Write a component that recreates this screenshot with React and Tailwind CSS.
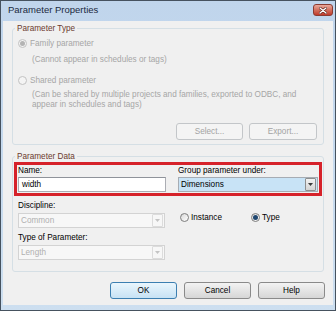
import React from 'react';

const Radio = ({ checked, disabled }) => (
  <span
    className={`w-[9px] h-[9px] rounded-full border shrink-0 flex items-center justify-center ${
      disabled ? 'border-[#c2c2c2] bg-[#f4f4f4]' : 'border-[#7d7d7d] bg-gradient-to-br from-[#d8d8d8] to-[#ffffff]'
    }`}
  >
    {checked && (
      <span className={`w-[5px] h-[5px] rounded-full ${disabled ? 'bg-[#b4b4b4]' : 'bg-[#1f466f]'}`} />
    )}
  </span>
);

const Arrow = ({ disabled }) => (
  <span
    className={`w-[11px] h-[13px] shrink-0 flex items-center justify-center border rounded-[1px] ${
      disabled ? 'border-[#dcdcdc] bg-[#f7f7f7]' : 'border-[#8e8f8f] bg-gradient-to-b from-[#f2f2f2] to-[#d4d4d4]'
    }`}
  >
    <svg width="5" height="3" viewBox="0 0 5 3">
      <path d="M0 0h5L2.5 3z" fill={disabled ? '#c4c4c4' : '#3a3a3a'} />
    </svg>
  </span>
);

const Btn = ({ children, disabled, primary, w }) => (
  <div
    className={`${w} h-[17px] rounded-[3px] border flex items-center justify-center ${
      disabled
        ? 'border-[#c3c6c9] bg-[#f4f4f4] text-[#a3a3a3]'
        : primary
        ? 'border-[#3c7fb1] bg-gradient-to-b from-[#eaf6fd] to-[#c7e2f4] text-black'
        : 'border-[#8a8a8a] bg-gradient-to-b from-[#f3f3f3] to-[#d6d6d6] text-black'
    }`}
  >
    {children}
  </div>
);

// group box with caption sitting on its top border
const Group = ({ title, className, children }) => (
  <div className={`border border-[#d5dfe5] rounded-[3px] ${className}`}>
    <div className="-mt-[6px] ml-[2px] px-[2px] w-fit bg-[#f0f0f0] text-[#6b3b2f]">{title}</div>
    {children}
  </div>
);

export default function App() {
  return (
    <div className="w-[336px] h-[311px] border border-[#46525f] bg-gradient-to-b from-[#c0d5ec] to-[#cddff0] flex flex-col px-[2px] pb-[5px] font-['Liberation_Sans',Arial,sans-serif] text-[8.2px] leading-[11px] text-black overflow-hidden">
      {/* title bar */}
      <div className="h-[20px] shrink-0 flex items-start justify-between pl-[5px] pt-[3px]">
        <span className="text-[9.5px] leading-[12px] text-[#1b2a40]">Parameter Properties</span>
        <div className="w-[20px] h-[12px] rounded-[3px] border border-[#8b3b31] bg-gradient-to-b from-[#eaa99c] via-[#d2705f] to-[#c0392a] flex items-center justify-center">
          <svg width="8" height="7" viewBox="0 0 8 7">
            <path d="M1 1l6 5M7 1L1 6" stroke="#5a1c14" strokeWidth="2.6" strokeLinecap="round" />
            <path d="M1 1l6 5M7 1L1 6" stroke="#ffffff" strokeWidth="1.4" strokeLinecap="round" />
          </svg>
        </div>
      </div>

      {/* dialog body */}
      <div className="flex-1 bg-[#f0f0f0] flex flex-col px-[9px]">
        <Group title="Parameter Type" className="mt-[7px] pb-[4px]">
          <div className="mt-[4px] pl-[5px] flex items-center gap-[3px] text-[#a6a6a6]">
            <Radio checked disabled />
            <span>Family parameter</span>
          </div>
          <div className="mt-[5px] pl-[19px] text-[#a6a6a6]">(Cannot appear in schedules or tags)</div>
          <div className="mt-[10px] pl-[5px] flex items-center gap-[3px] text-[#a6a6a6]">
            <Radio disabled />
            <span>Shared parameter</span>
          </div>
          <div className="mt-[4px] pl-[19px] pr-[20px] leading-[10px] text-[#a6a6a6]">
            (Can be shared by multiple projects and families, exported to ODBC, and appear in schedules and tags)
          </div>
          <div className="mt-[13px] pr-[6px] flex justify-end gap-[6px]">
            <Btn disabled w="w-[67px]">Select...</Btn>
            <Btn disabled w="w-[68px]">Export...</Btn>
          </div>
        </Group>

        <Group title="Parameter Data" className="mt-[11px] pb-[11px]">
          <div className="mx-[1px] border-[3px] border-[#d6222a] px-[1px] pb-[1px] flex justify-between">
            <div className="w-[148px] flex flex-col">
              <span>Name:</span>
              <div className="mt-[1px] h-[15px] border border-[#abadb3] border-t-[#8f939a] bg-white pl-[3px] flex items-center">
                width
              </div>
            </div>
            <div className="w-[140px] flex flex-col">
              <span>Group parameter under:</span>
              <div className="mt-[1px] h-[15px] border border-[#a6acb3] bg-[#c8e3f6] pl-[2px] pr-[1px] flex items-center justify-between">
                <span>Dimensions</span>
                <Arrow />
              </div>
            </div>
          </div>

          <div className="mt-[4px] pl-[5px] flex">
            <div className="w-[147px] flex flex-col">
              <span>Discipline:</span>
              <div className="mt-[2px] h-[15px] border border-[#d3d3d3] bg-[#f7f7f7] pl-[2px] pr-[1px] flex items-center justify-between text-[#b0b0b0]">
                <span>Common</span>
                <Arrow disabled />
              </div>
              <span className="mt-[4px]">Type of Parameter:</span>
              <div className="mt-[2px] h-[15px] border border-[#d3d3d3] bg-[#f7f7f7] pl-[2px] pr-[1px] flex items-center justify-between text-[#b0b0b0]">
                <span>Length</span>
                <Arrow disabled />
              </div>
            </div>
            <div className="ml-[15px] pt-[12px] flex items-start">
              <div className="w-[71px] flex items-center gap-[2px]">
                <Radio />
                <span>Instance</span>
              </div>
              <div className="flex items-center gap-[2px]">
                <Radio checked />
                <span>Type</span>
              </div>
            </div>
          </div>
        </Group>

        <div className="mt-[10px] -mr-[1px] flex justify-end gap-[7px]">
          <Btn primary w="w-[67px]">OK</Btn>
          <Btn w="w-[67px]">Cancel</Btn>
          <Btn w="w-[67px]">Help</Btn>
        </div>
      </div>
    </div>
  );
}
